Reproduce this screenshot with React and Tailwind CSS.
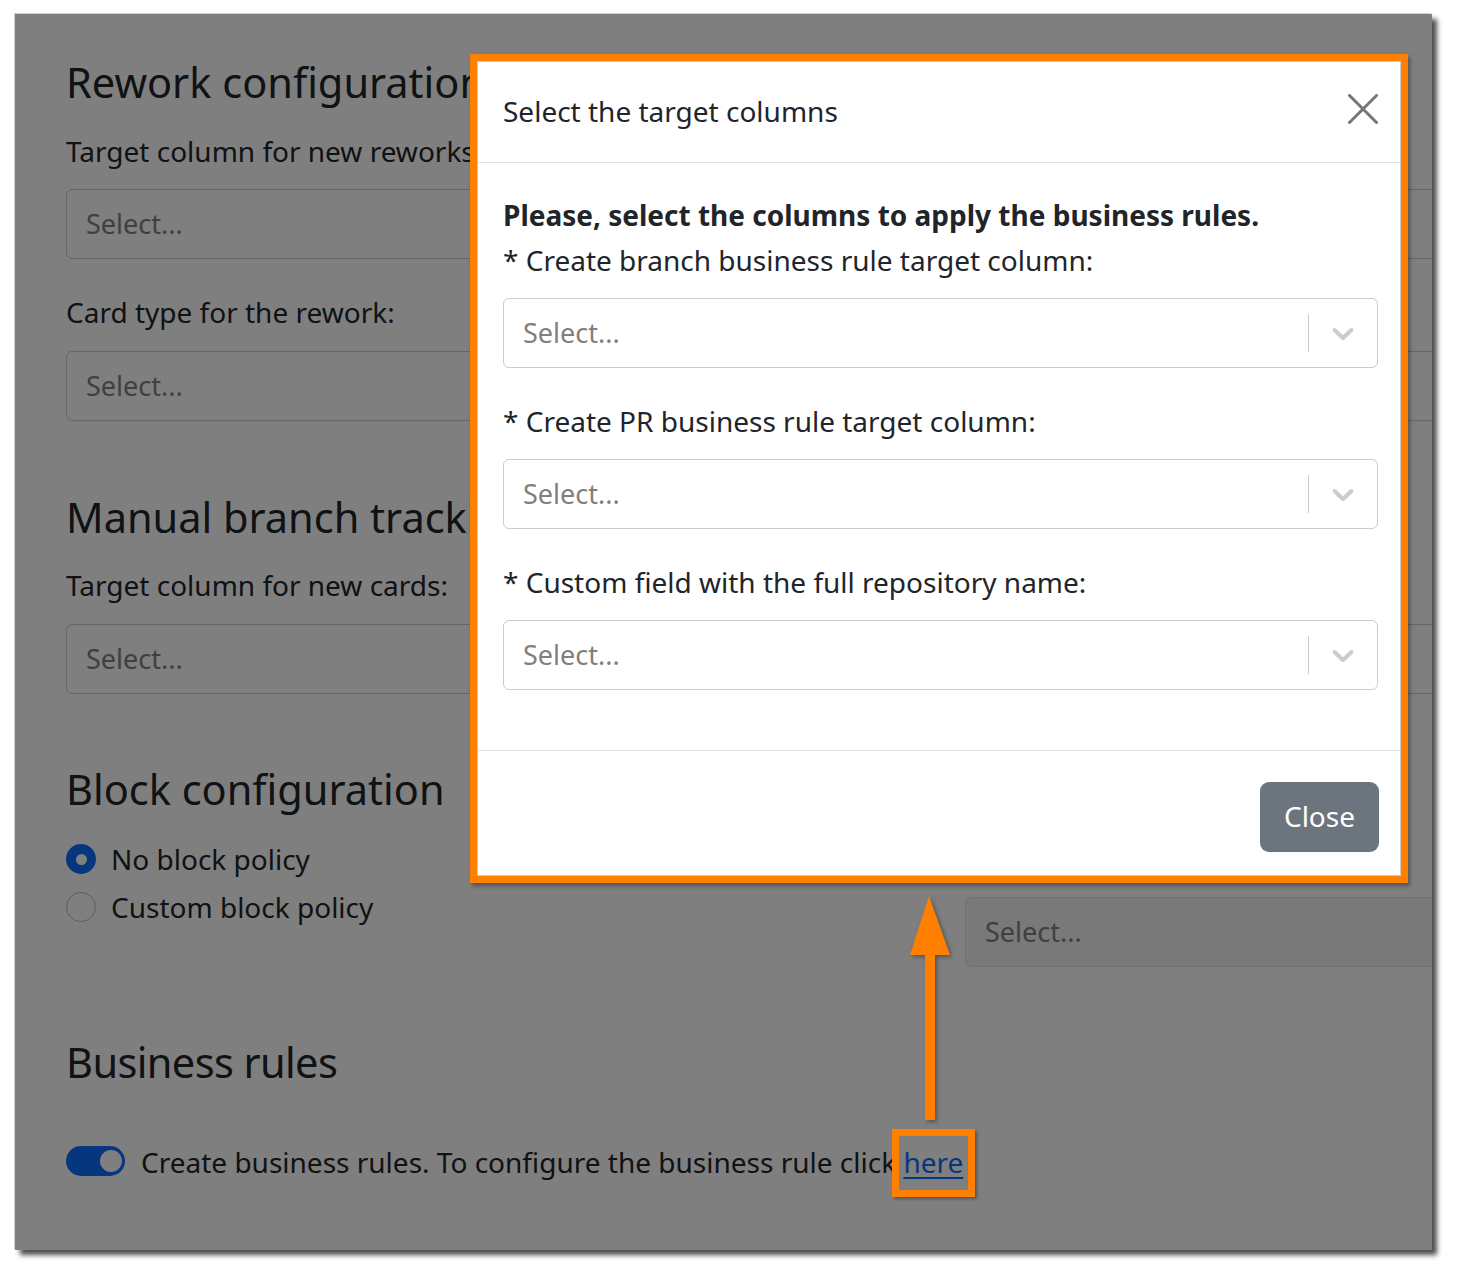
import React from "react";

function Chevron() {
  return (
    <svg width="36" height="36" viewBox="0 0 20 20" fill="#cccccc">
      <path d="M4.516 7.548c0.436-0.446 1.043-0.481 1.576 0l3.908 3.747 3.908-3.747c0.533-0.481 1.141-0.446 1.574 0 0.436 0.445 0.408 1.197 0 1.615-0.406 0.418-4.695 4.502-4.695 4.502-0.217 0.223-0.502 0.335-0.787 0.335s-0.57-0.112-0.789-0.335c0 0-4.287-4.084-4.695-4.502s-0.436-1.17 0-1.615z" />
    </svg>
  );
}

function ModalSelect() {
  return (
    <div className="flex h-[70px] items-center rounded-[6px] border border-[#cccccc] bg-white">
      <div className="flex-1 pl-[19px] text-[27px] leading-[34px] text-[#808080]">Select...</div>
      <div className="h-[38px] w-px bg-[#cccccc]" />
      <div className="flex w-[68px] items-center justify-center">
        <Chevron />
      </div>
    </div>
  );
}

function PageSelect({ disabled }) {
  return (
    <div
      className={
        disabled
          ? "flex h-[70px] w-[1420px] items-center rounded-[6px] border border-[#e6e6e6] bg-[#f2f2f2]"
          : "flex h-[70px] w-[1420px] items-center rounded-[6px] border border-[#cccccc] bg-white"
      }
    >
      <div className="pl-[19px] text-[27px] leading-[34px] text-[#808080]">Select...</div>
    </div>
  );
}

export default function App() {
  return (
    <div className="min-h-[1277px] w-[1459px] bg-white pl-[15px] pt-[14px] font-['Noto_Sans',sans-serif]">
      <div className="relative h-[1236px] w-[1417px] overflow-hidden bg-white shadow-[-1px_-1px_0_#cfcfcf,5px_5px_5px_rgba(0,0,0,0.7)]">
        {/* page content */}
        <div className="pl-[51px] pt-[42px] text-[#212529]">
          <h3 className="whitespace-nowrap text-[41.5px] font-normal leading-[52px]">Rework configuration</h3>
          <div className="mt-[26px] whitespace-nowrap text-[28px] leading-[34px]">Target column for new reworks:</div>
          <div className="mt-[21px]">
            <PageSelect />
          </div>
          <div className="mt-[36px] text-[28px] leading-[34px]">Card type for the rework:</div>
          <div className="mt-[22px]">
            <PageSelect />
          </div>

          <h3 className="mt-[70px] whitespace-nowrap text-[41.5px] font-normal leading-[52px]">Manual branch tracking</h3>
          <div className="mt-[25px] text-[28px] leading-[34px]">Target column for new cards:</div>
          <div className="mt-[22px]">
            <PageSelect />
          </div>

          <h3 className="mt-[69px] whitespace-nowrap text-[41.5px] font-normal leading-[52px]">Block configuration</h3>
          <div className="mt-[20px] flex items-start">
            <div className="w-[899px] shrink-0">
              <div className="flex h-[48px] items-center gap-[15px]">
                <span className="flex h-[30px] w-[30px] items-center justify-center rounded-full bg-[#0d6efd]">
                  <span className="h-[11px] w-[11px] rounded-full bg-white" />
                </span>
                <span className="text-[28px] leading-[34px]">No block policy</span>
              </div>
              <div className="flex h-[48px] items-center gap-[15px]">
                <span className="h-[30px] w-[30px] rounded-full border border-[#bcbcbc] bg-white" />
                <span className="text-[28px] leading-[34px]">Custom block policy</span>
              </div>
            </div>
            <div className="mt-[62px]">
              <PageSelect disabled />
            </div>
          </div>

          <h3 className="mt-[69px] whitespace-nowrap text-[41.5px] font-normal leading-[52px] tracking-[-0.6px]">Business rules</h3>
          <div className="mt-[57px] flex items-start">
            <span className="mt-[1px] flex h-[30px] w-[59px] shrink-0 items-center justify-end rounded-full bg-[#0d6efd] pr-[3px]">
              <span className="h-[22px] w-[22px] rounded-full bg-white" />
            </span>
            <span className="ml-[16px] whitespace-nowrap text-[28px] leading-[34px]">
              Create business rules. To configure the business rule click{" "}
              <span className="relative inline-block">
                <span className="text-[#0d6efd] underline decoration-[2px] underline-offset-[4px]">here</span>
                <span className="absolute -bottom-[18px] -left-[11px] -right-[12px] -top-[16px] z-10 border-[7px] border-[#ff8000] shadow-[2px_2px_3px_rgba(0,0,0,0.35)]" />
              </span>
            </span>
          </div>
        </div>

        {/* backdrop */}
        <div className="absolute inset-0 bg-black/50" />

        {/* arrow annotation */}
        <svg
          className="absolute left-[890px] top-[876px] drop-shadow-[2px_2px_2px_rgba(0,0,0,0.35)]"
          width="50"
          height="240"
          viewBox="0 0 50 240"
        >
          <polygon points="24,6 5,65 45,65" fill="#ff8000" />
          <rect x="20" y="64" width="10" height="166" fill="#ff8000" />
        </svg>

        {/* modal */}
        <div className="absolute left-[455px] top-[40px] w-[938px] border-[7px] border-[#ff8000] shadow-[2px_3px_4px_rgba(0,0,0,0.35)]">
          <div className="border border-[#d0d0d0] bg-white text-[#212529]">
            <div className="flex h-[101px] items-center justify-between border-b border-[#dee2e6] pl-[25px] pr-[22px]">
              <div className="mb-[3px] text-[28px] leading-[36px]">Select the target columns</div>
              <svg className="mb-[7px]" width="30" height="30" viewBox="0 0 30 30">
                <path d="M1.5 1.5 L28.5 28.5 M28.5 1.5 L1.5 28.5" stroke="#767676" strokeWidth="3" strokeLinecap="round" />
              </svg>
            </div>
            <div className="pb-[60px] pl-[25px] pr-[22px] pt-[30px]">
              <div className="whitespace-nowrap text-[28px] font-bold leading-[45px]">Please, select the columns to apply the business rules.</div>
              <div className="text-[28px] leading-[45px]">* Create branch business rule target column:</div>
              <div className="mt-[15px]">
                <ModalSelect />
              </div>
              <div className="mt-[31px] text-[28px] leading-[45px]">* Create PR business rule target column:</div>
              <div className="mt-[15px]">
                <ModalSelect />
              </div>
              <div className="mt-[31px] text-[28px] leading-[45px]">* Custom field with the full repository name:</div>
              <div className="mt-[15px]">
                <ModalSelect />
              </div>
            </div>
            <div className="flex justify-end border-t border-[#dee2e6] pb-[23px] pr-[21px] pt-[31px]">
              <button className="flex h-[70px] w-[119px] items-center justify-center rounded-[9px] bg-[#6c757d] pb-[2px] text-[28px] leading-[36px] text-white">
                Close
              </button>
            </div>
          </div>
        </div>
      </div>
    </div>
  );
}
